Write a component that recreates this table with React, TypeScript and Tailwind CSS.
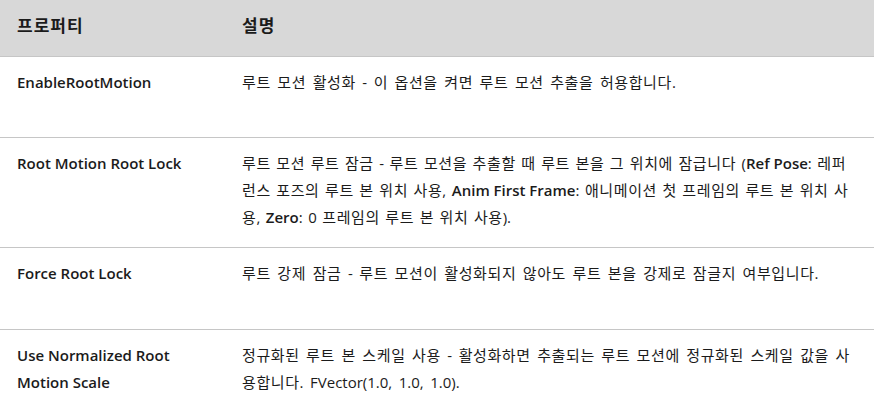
import React from 'react';

const K = ({ children }: { children: string }) => (
  <>
    {children.split(/([\u3131-\uD7A3]+)/).map((part, i) =>
      /[\u3131-\uD7A3]/.test(part) ? (
        <span key={i} className="tracking-[0.6px]">{part}</span>
      ) : (
        part
      )
    )}
  </>
);

const B = ({ children }: { children: string }) => (
  <b className="font-semibold [word-spacing:0px]">{children}</b>
);

interface Row {
  name: string;
  desc: React.ReactNode;
  height: string;
  spacing: string;
}

const rows: Row[] = [
  {
    name: 'EnableRootMotion',
    desc: <K>루트 모션 활성화 - 이 옵션을 켜면 루트 모션 추출을 허용합니다.</K>,
    height: 'h-[81px]',
    spacing: '[word-spacing:2.6px]',
  },
  {
    name: 'Root Motion Root Lock',
    desc: (
      <>
        <K>루트 모션 루트 잠금 - 루트 모션을 추출할 때 루트 본을 그 위치에 잠급니다 (</K>
        <B>Ref Pose</B>
        <K>: 레퍼런스 포즈의 루트 본 위치 사용, </K>
        <B>Anim First Frame</B>
        <K>: 애니메이션 첫 프레임의 루트 본 위치 사용, </K>
        <B>Zero</B>
        <K>: 0 프레임의 루트 본 위치 사용).</K>
      </>
    ),
    height: 'h-[110px]',
    spacing: '[word-spacing:1.6px]',
  },
  {
    name: 'Force Root Lock',
    desc: <K>루트 강제 잠금 - 루트 모션이 활성화되지 않아도 루트 본을 강제로 잠글지 여부입니다.</K>,
    height: 'h-[82px]',
    spacing: '[word-spacing:2.6px]',
  },
  {
    name: 'Use Normalized Root Motion Scale',
    desc: <K>정규화된 루트 본 스케일 사용 - 활성화하면 추출되는 루트 모션에 정규화된 스케일 값을 사용합니다. FVector(1.0, 1.0, 1.0).</K>,
    height: 'h-[90px]',
    spacing: '[word-spacing:2.6px]',
  },
];

export default function App() {
  return (
    <div className="w-[874px] h-[412px] overflow-hidden bg-white text-[#1b1b1b] font-['Open_Sans','Noto_Sans_CJK_KR',sans-serif] text-[15px] leading-[27px]">
      <table className="w-full table-fixed border-collapse">
        <thead>
          <tr className="h-[56px] bg-[#d8d8d8] border-b border-[#c6c6c6]">
            <th className="w-[225px] pl-[17px] text-left align-middle font-bold text-[17px] tracking-[1px] pb-[4px]">프로퍼티</th>
            <th className="pl-[17px] text-left align-middle font-bold text-[17px] tracking-[1px] pb-[4px]">설명</th>
          </tr>
        </thead>
        <tbody>
          {rows.map((r, i) => (
            <tr key={i} className={`${r.height} border-b border-[#c6c6c6]`}>
              <td className="pl-[17px] pr-4 pt-[12px] align-top font-semibold">{r.name}</td>
              <td className={`pl-[17px] pr-[16px] pt-[12px] align-top ${r.spacing}`}>{r.desc}</td>
            </tr>
          ))}
        </tbody>
      </table>
    </div>
  );
}
